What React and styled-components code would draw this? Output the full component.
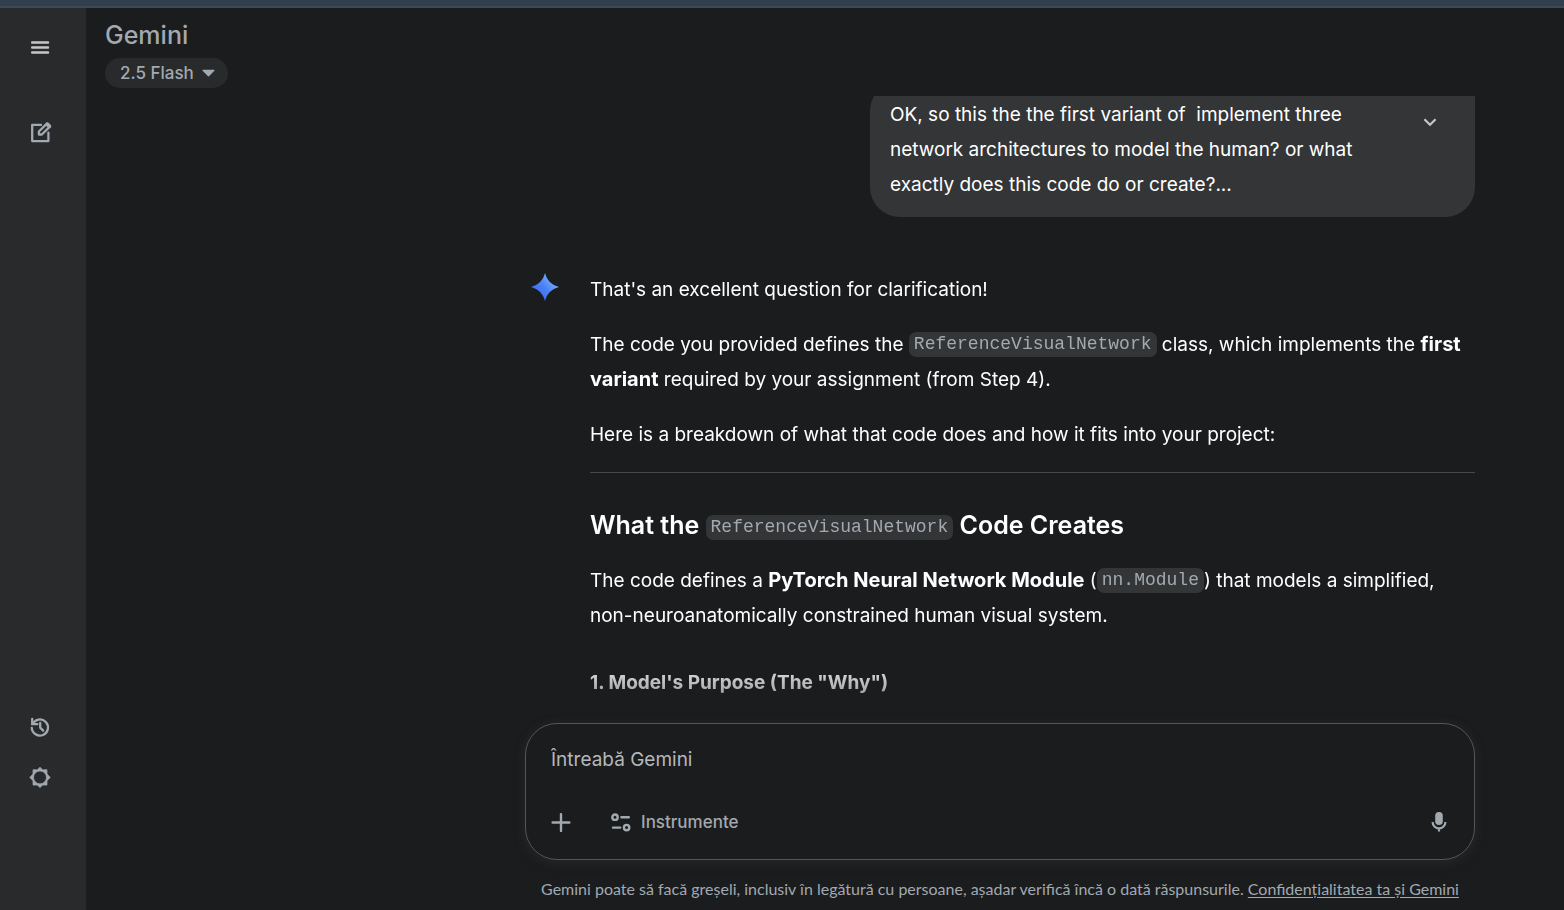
import React from "react";
import styled, { createGlobalStyle } from "styled-components";

const GlobalStyle = createGlobalStyle`
  *, *::before, *::after { box-sizing: border-box; }
  body {
    margin: 0;
    background: #1b1c1d;
    color: #ffffff;
    font-family: Inter, Roboto, "Noto Sans", sans-serif;
    font-size: 19px;
    line-height: 35px;
  }
  button, input { font: inherit; color: inherit; }
`;

const Shell = styled.div`
  display: flex;
  flex-direction: column;
  height: 100vh;
`;

const WindowEdge = styled.div`
  flex: none;
  height: 8px;
  background: #313f4e;
  border-bottom: 2px solid #3e4953;
`;

const Body = styled.div`
  display: flex;
  flex: 1;
  min-height: 0;
`;

const Sidebar = styled.nav`
  display: flex;
  flex-direction: column;
  flex: none;
  width: 86px;
  padding: 14px 15px 108px;
  background: #292a2c;
`;

const IconButton = styled.button`
  display: flex;
  align-items: center;
  justify-content: center;
  flex: none;
  width: 50px;
  height: 50px;
  padding: 0;
  border: 0;
  border-radius: 50%;
  background: transparent;
  color: ${(p) => p.$color || "#a2a9b0"};
  cursor: pointer;
`;

const NewChatButton = styled(IconButton)`
  margin-top: 35px;
  margin-bottom: auto;
`;

const Main = styled.main`
  display: flex;
  flex-direction: column;
  flex: 1;
  min-width: 0;
`;

const Header = styled.header`
  display: flex;
  flex-direction: column;
  align-items: flex-start;
  flex: none;
  height: 88px;
  padding: 10px 19px 0;
  color: #a2a9b0;
`;

const Brand = styled.h1`
  margin: 0;
  font-size: 25px;
  font-weight: 500;
  line-height: 35px;
`;

const ModelButton = styled.button`
  display: flex;
  align-items: center;
  gap: 8px;
  height: 30px;
  margin-top: 5px;
  padding: 0 13px 0 15px;
  border: 0;
  border-radius: 15px;
  background: #292a2c;
  font-size: 17px;
  font-weight: 500;
  line-height: 30px;
  cursor: pointer;
`;

const Column = styled.div`
  width: 100%;
  max-width: 1039px;
  margin-left: auto;
  padding-right: 89px;
`;

const ChatLog = styled.section`
  flex: 1;
  min-height: 0;
  overflow: hidden;
  mask-image: linear-gradient(to top, rgba(0, 0, 0, 0.3), #000 68px);
`;

const UserBubble = styled.div`
  display: flex;
  justify-content: space-between;
  width: 605px;
  margin: -15px 0 55px auto;
  padding: 16px 20px 15px;
  border-radius: 30px 5px 30px 30px;
  background: #333537;
`;

const Query = styled.p`
  width: 490px;
  margin: 0;
  white-space: pre-wrap;
`;

const Answer = styled.article`
  display: flex;
  gap: 30px;
`;

const Avatar = styled.div`
  flex: none;
  width: 35px;
  padding: 0 0 0 5px;
`;

const Prose = styled.div`
  flex: 1;
  min-width: 0;

  p { margin: 0 0 20px; }
  b { font-size: 20px; font-weight: 700; line-height: 20px; }
  hr { height: 1px; margin: 0 0 35px; border: 0; background: #47494b; }
  h2 { margin: 0 0 20px; font-size: 25px; font-weight: 600; line-height: 35px; }
  h3 { margin: 32px 0 0; font-size: 19px; font-weight: 700; line-height: 35px; }
`;

const NoBreak = styled.span`
  white-space: nowrap;
`;

const Code = styled.code`
  display: inline-block;
  padding: 0 5px;
  border-radius: 7px;
  background: #333537;
  color: #a2a9b0;
  font-family: "Liberation Mono", monospace;
  font-size: 18px;
  font-weight: 400;
  line-height: 25px;
  vertical-align: 2px;
`;

const Composer = styled.form`
  display: flex;
  flex-direction: column;
  justify-content: space-between;
  height: 137px;
  padding: 18px 10px 12px;
  border: 1px solid #545658;
  border-radius: 32px;
  box-shadow: 0 2px 10px 2px rgba(60, 64, 67, 0.25);
`;

const Prompt = styled.input`
  width: 100%;
  height: 35px;
  padding: 0 15px;
  border: 0;
  outline: 0;
  background: transparent;

  &::placeholder { color: #b5b8bb; opacity: 1; }
`;

const Tools = styled.div`
  display: flex;
  align-items: center;
`;

const ToolsButton = styled.button`
  display: flex;
  align-items: center;
  gap: 8px;
  height: 50px;
  margin: 0 auto 0 10px;
  padding: 0 13px;
  border: 0;
  background: transparent;
  color: #a2a9b0;
  font-size: 17px;
  font-weight: 500;
  cursor: pointer;
`;

const Disclaimer = styled.p`
  margin: 0;
  padding: 17px 0 9px;
  color: #a2a9b0;
  font-family: Lato, "Noto Sans", sans-serif;
  font-size: 16px;
  line-height: 24px;
  text-align: center;

  a { color: inherit; text-underline-offset: 2px; }
`;

const Stroke = ({ size = 24, width = 2, children, ...rest }) => (
  <svg width={size} height={size} viewBox={`0 0 ${size} ${size}`} fill="none" stroke="currentColor"
    strokeWidth={width} strokeLinecap="round" strokeLinejoin="round" aria-hidden="true" {...rest}>
    {children}
  </svg>
);

const MenuIcon = () => (
  <Stroke width={2.5}><path d="M4.2 7.5h15.8M4.2 12.5h15.8M4.2 17.5h15.8" /></Stroke>
);

const ComposeIcon = () => (
  <Stroke width={2.3}>
    <path d="M13 4.9H4.2v16.2h16.2v-8.4" />
    <path d="M10.9 14.5v-3l7.9-7.9 3 3-7.9 7.9z" />
    <path d="M19.4 4.4l1.8 1.8" strokeWidth={4} />
  </Stroke>
);

const HistoryIcon = () => (
  <Stroke width={2.3}>
    <path d="M4.2 4v5.2h5.2" strokeLinejoin="miter" />
    <path d="M4.6 9a8.1 8.1 0 1 1-.8 3.8" />
    <path d="M12.2 8v4.6l3 3" />
  </Stroke>
);

const SettingsIcon = () => (
  <svg width="24" height="24" viewBox="0 0 24 24" fill="currentColor" stroke="currentColor"
    strokeWidth="0.8" strokeLinejoin="round" aria-hidden="true">
    <path fillRule="evenodd" d="M12 2.2l2.6 2.7 4.3-.2.1 4.4 3.2 3.3-3.2 3.3-.1 4.4-4.3-.2-2.6 2.7-2.6-2.7-4.3.2-.1-4.4-3.2-3.3L5 9.1l.1-4.4 4.3.2zM12 5.9a6.5 6.5 0 1 0 0 13 6.5 6.5 0 0 0 0-13z" />
  </svg>
);

const CaretIcon = () => (
  <svg width="13" height="8" viewBox="0 0 13 8" fill="currentColor" aria-hidden="true">
    <path d="M1 .7h11a.6.6 0 0 1 .4 1L7 7.2a.7.7 0 0 1-1 0L.6 1.7A.6.6 0 0 1 1 .7z" />
  </svg>
);

const ChevronIcon = () => (
  <Stroke width={2.2} strokeLinecap="butt" strokeLinejoin="miter"><path d="M6.4 9.2l5.6 5.6 5.6-5.6" /></Stroke>
);

const PlusIcon = () => (
  <Stroke width={2.4}><path d="M12 4.1v16.8M3.6 12.5h16.8" /></Stroke>
);

const SlidersIcon = () => (
  <Stroke width={2.4}>
    <circle cx="6" cy="7.2" r="2.7" />
    <circle cx="17.6" cy="17.6" r="2.7" />
    <path d="M12.4 7.2h7.4M4 17.6h7.2" />
  </Stroke>
);

const MicIcon = () => (
  <svg width="24" height="24" viewBox="0 0 24 24" fill="none" aria-hidden="true">
    <rect x="8.2" y="2" width="7.6" height="13" rx="3.8" fill="currentColor" />
    <path d="M5.6 12a6.4 6.4 0 0 0 12.8 0M12 18v3.6" stroke="currentColor" strokeWidth="2.2" />
  </svg>
);

const SparkIcon = () => (
  <svg width="30" height="30" viewBox="0 0 30 30" aria-hidden="true">
    <defs>
      <linearGradient id="spark" x1="7" y1="22" x2="22" y2="8" gradientUnits="userSpaceOnUse">
        <stop offset="0" stopColor="#3f6ff0" />
        <stop offset="0.5" stopColor="#4a82f5" />
        <stop offset="1" stopColor="#72a8fb" />
      </linearGradient>
    </defs>
    <path fill="url(#spark)" d="M15 1C16.8 8.2 21.6 13 29 15C21.6 17 16.8 21.8 15 29C13.2 21.8 8.4 17 1 15C8.4 13 13.2 8.2 15 1z" />
  </svg>
);

export default function App() {
  return (
    <Shell>
      <GlobalStyle />
      <WindowEdge />
      <Body>
        <Sidebar>
          <IconButton type="button" aria-label="Meniu" $color="#c4c7c5"><MenuIcon /></IconButton>
          <NewChatButton type="button" aria-label="Conversație nouă"><ComposeIcon /></NewChatButton>
          <IconButton type="button" aria-label="Activitate"><HistoryIcon /></IconButton>
          <IconButton type="button" aria-label="Setări"><SettingsIcon /></IconButton>
        </Sidebar>
        <Main>
          <Header>
            <Brand>Gemini</Brand>
            <ModelButton type="button">2.5 Flash <CaretIcon /></ModelButton>
          </Header>
          <ChatLog>
            <Column>
              <UserBubble>
                <Query>{"OK, so this the the first variant of  implement three network architectures to model the human? or what exactly does this code do or create?..."}</Query>
                <IconButton type="button" aria-label="Extinde" $color="#c4c7c5"><ChevronIcon /></IconButton>
              </UserBubble>
              <Answer>
                <Avatar><SparkIcon /></Avatar>
                <Prose>
                  <p>That's an excellent question for clarification!</p>
                  <p>
                    The code you provided defines the <Code>ReferenceVisualNetwork</Code> class, which implements
                    the <b>first variant</b> required by your assignment (from Step 4).
                  </p>
                  <p>Here is a breakdown of what that code does and how it fits into your project:</p>
                  <hr />
                  <h2>What the <Code>ReferenceVisualNetwork</Code> Code Creates</h2>
                  <p>
                    The code defines a <b>PyTorch Neural Network Module</b> (<Code>nn.Module</Code>) that models a
                    simplified, <NoBreak>non-neuroanatomically</NoBreak> constrained human visual system.
                  </p>
                  <h3>1. Model's Purpose (The "Why")</h3>
                </Prose>
              </Answer>
            </Column>
          </ChatLog>
          <Column>
            <Composer>
              <Prompt type="text" aria-label="Întreabă Gemini" placeholder="Întreabă Gemini" />
              <Tools>
                <IconButton type="button" aria-label="Adaugă fișiere"><PlusIcon /></IconButton>
                <ToolsButton type="button"><SlidersIcon /> Instrumente</ToolsButton>
                <IconButton type="button" aria-label="Microfon"><MicIcon /></IconButton>
              </Tools>
            </Composer>
            <Disclaimer>
              Gemini poate să facă greșeli, inclusiv în legătură cu persoane, așadar verifică încă o dată
              răspunsurile. <a href="#confidentialitate">Confidențialitatea ta și Gemini</a>
            </Disclaimer>
          </Column>
        </Main>
      </Body>
    </Shell>
  );
}
